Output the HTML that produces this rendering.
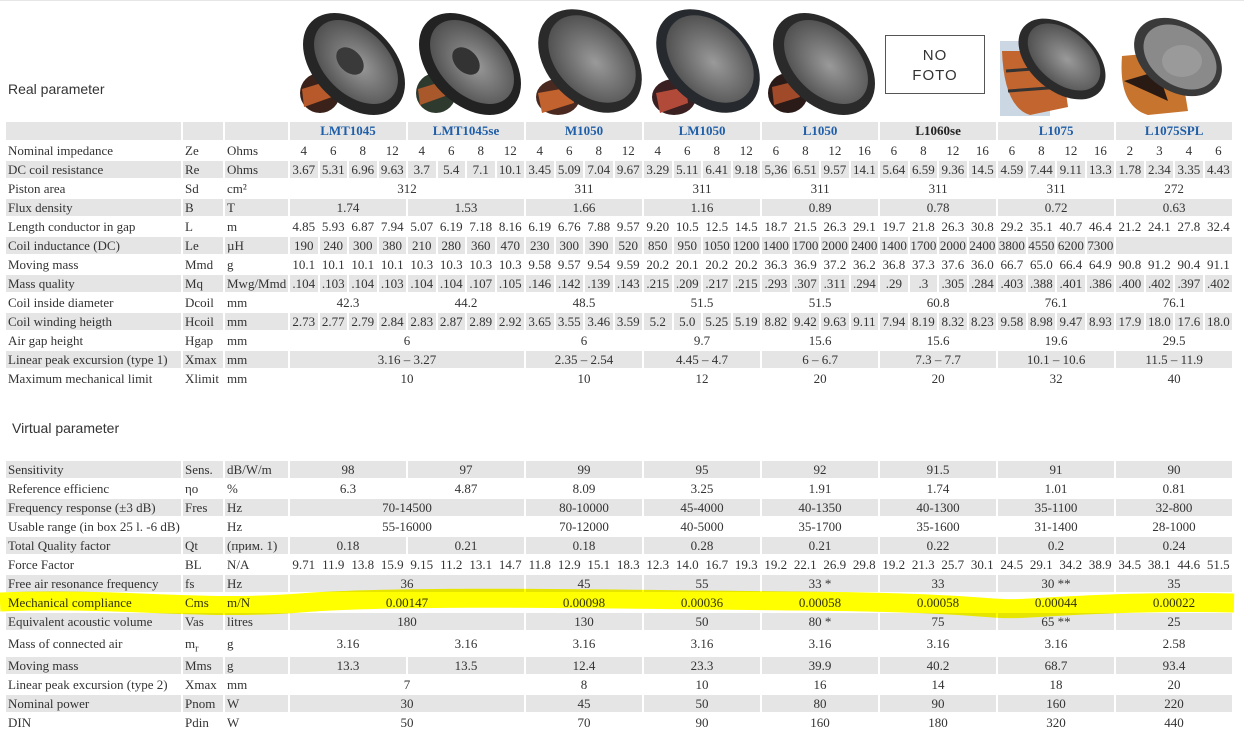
<!DOCTYPE html>
<html><head><meta charset="utf-8">
<style>
html,body{margin:0;padding:0;background:#fff;width:1244px;height:730px;overflow:hidden;position:relative}
body{border-top:1px solid #e6e6e6;box-sizing:border-box}
.h{position:absolute;font-family:"Liberation Sans",Arial,sans-serif;font-size:14px;color:#333}
table{position:absolute;left:4px;border-collapse:separate;border-spacing:2px;table-layout:fixed;width:1230px;font-family:"Liberation Serif","Times New Roman",serif;font-size:13px;color:#333}
td{padding:0;height:17px;line-height:17px;white-space:nowrap;overflow:hidden;text-align:center}
td.l,td.s,td.u{text-align:left;padding-left:2px}
tr.g td{background:#e5e5e5}
th{padding:0;height:18px;background:#e5e5e5;font-weight:bold;color:#1f5ea8;font-size:13px}
th.k{color:#222}
th.e{background:#e5e5e5}
.sp{position:absolute}
</style></head><body>
<div class="h" style="left:8px;top:80px">Real parameter</div>
<div class="h" style="left:12px;top:419px">Virtual parameter</div>

<svg class="sp" style="left:0;top:0" width="1244" height="118">
<defs>
<radialGradient id="cone" cx="55%" cy="50%" r="60%"><stop offset="0" stop-color="#9a9a9a"/><stop offset="1" stop-color="#4a4a4a"/></radialGradient>
</defs>
<g transform="translate(292,8)">
<ellipse cx="28" cy="84" rx="20" ry="20" fill="#3a221a"/><path d="M10 80 L36 72 L40 88 L12 98Z" fill="#b7592a"/>
<ellipse cx="62" cy="55" rx="60" ry="40" transform="rotate(45 62 55)" fill="#262626"/>
<ellipse cx="64" cy="53" rx="50" ry="32" transform="rotate(45 64 53)" fill="url(#cone)"/>
<ellipse cx="58" cy="52" rx="16" ry="11" transform="rotate(45 58 52)" fill="#3a3a3a"/></g>
<g transform="translate(408,8)">
<ellipse cx="28" cy="84" rx="20" ry="20" fill="#2f3a2f"/><path d="M10 80 L36 72 L40 86 L12 96Z" fill="#a8582a"/>
<ellipse cx="62" cy="55" rx="60" ry="40" transform="rotate(45 62 55)" fill="#222"/>
<ellipse cx="64" cy="53" rx="50" ry="32" transform="rotate(45 64 53)" fill="url(#cone)"/>
<ellipse cx="58" cy="52" rx="16" ry="11" transform="rotate(45 58 52)" fill="#333"/></g>
<g transform="translate(526,8)">
<ellipse cx="32" cy="88" rx="22" ry="18" fill="#4a2a20"/><path d="M12 84 L46 78 L48 94 L16 104Z" fill="#c2622e"/>
<ellipse cx="64" cy="52" rx="60" ry="42" transform="rotate(45 64 52)" fill="#2a2a2a"/>
<ellipse cx="66" cy="50" rx="51" ry="35" transform="rotate(45 66 50)" fill="url(#cone)"/></g>
<g transform="translate(644,8)">
<ellipse cx="30" cy="88" rx="22" ry="18" fill="#3a2020"/><path d="M12 84 L42 78 L44 94 L16 104Z" fill="#b24a3a"/>
<ellipse cx="64" cy="52" rx="60" ry="42" transform="rotate(45 64 52)" fill="#262a2e"/>
<ellipse cx="66" cy="50" rx="51" ry="35" transform="rotate(45 66 50)" fill="url(#cone)"/></g>
<g transform="translate(762,8)">
<ellipse cx="26" cy="84" rx="20" ry="20" fill="#2a1a18"/><path d="M10 78 L34 72 L38 88 L12 96Z" fill="#a04a2a"/>
<ellipse cx="62" cy="55" rx="60" ry="40" transform="rotate(45 62 55)" fill="#2a2a2a"/>
<ellipse cx="64" cy="53" rx="50" ry="32" transform="rotate(45 64 53)" fill="url(#cone)"/></g>
<rect x="885.5" y="34.5" width="99" height="58" fill="#fff" stroke="#555"/>
<text x="935" y="59" text-anchor="middle" font-family="Liberation Sans,sans-serif" font-size="15" fill="#333" letter-spacing="1">NO</text>
<text x="935" y="79" text-anchor="middle" font-family="Liberation Sans,sans-serif" font-size="15" fill="#333" letter-spacing="1">FOTO</text>
<g transform="translate(1000,10)">
<rect x="0" y="30" width="50" height="75" fill="#a9bccf" opacity=".6"/>
<path d="M2 40 Q4 96 30 104 L68 96 L60 40Z" fill="#c2652e"/>
<path d="M6 60 L60 56 M8 80 L62 76" stroke="#333" stroke-width="3"/>
<ellipse cx="62" cy="48" rx="50" ry="32" transform="rotate(40 62 48)" fill="#2b2b2b"/>
<ellipse cx="64" cy="46" rx="42" ry="26" transform="rotate(40 64 46)" fill="url(#cone)"/></g>
<g transform="translate(1118,10)">
<path d="M4 45 Q0 95 30 104 L70 100 L60 40Z" fill="#c7742e"/>
<path d="M6 70 L40 60 L50 90Z" fill="#2a1a14"/>
<ellipse cx="60" cy="46" rx="48" ry="34" transform="rotate(35 60 46)" fill="#3a3a3a"/>
<ellipse cx="62" cy="46" rx="40" ry="28" transform="rotate(35 62 46)" fill="#8a8a8a"/>
<ellipse cx="64" cy="50" rx="20" ry="16" fill="#9a9a9a"/></g>
</svg>

<table style="top:119px">
<colgroup><col style="width:175px"><col style="width:40px"><col style="width:63px">
<col span="32" style="width:27.5px"></colgroup>
<tr><th class="e"></th><th class="e"></th><th class="e"></th><th colspan="4">LMT1045</th><th colspan="4">LMT1045se</th><th colspan="4">M1050</th><th colspan="4">LM1050</th><th colspan="4">L1050</th><th colspan="4" class="k">L1060se</th><th colspan="4">L1075</th><th colspan="4">L1075SPL</th></tr>
<tr><td class="l">Nominal impedance</td><td class="s">Ze</td><td class="u">Ohms</td><td>4</td><td>6</td><td>8</td><td>12</td><td>4</td><td>6</td><td>8</td><td>12</td><td>4</td><td>6</td><td>8</td><td>12</td><td>4</td><td>6</td><td>8</td><td>12</td><td>6</td><td>8</td><td>12</td><td>16</td><td>6</td><td>8</td><td>12</td><td>16</td><td>6</td><td>8</td><td>12</td><td>16</td><td>2</td><td>3</td><td>4</td><td>6</td></tr>
<tr class="g"><td class="l">DC coil resistance</td><td class="s">Re</td><td class="u">Ohms</td><td>3.67</td><td>5.31</td><td>6.96</td><td>9.63</td><td>3.7</td><td>5.4</td><td>7.1</td><td>10.1</td><td>3.45</td><td>5.09</td><td>7.04</td><td>9.67</td><td>3.29</td><td>5.11</td><td>6.41</td><td>9.18</td><td>5,36</td><td>6.51</td><td>9.57</td><td>14.1</td><td>5.64</td><td>6.59</td><td>9.36</td><td>14.5</td><td>4.59</td><td>7.44</td><td>9.11</td><td>13.3</td><td>1.78</td><td>2.34</td><td>3.35</td><td>4.43</td></tr>
<tr><td class="l">Piston area</td><td class="s">Sd</td><td class="u">cm²</td><td colspan="8">312</td><td colspan="4">311</td><td colspan="4">311</td><td colspan="4">311</td><td colspan="4">311</td><td colspan="4">311</td><td colspan="4">272</td></tr>
<tr class="g"><td class="l">Flux density</td><td class="s">B</td><td class="u">T</td><td colspan="4">1.74</td><td colspan="4">1.53</td><td colspan="4">1.66</td><td colspan="4">1.16</td><td colspan="4">0.89</td><td colspan="4">0.78</td><td colspan="4">0.72</td><td colspan="4">0.63</td></tr>
<tr><td class="l">Length conductor in gap</td><td class="s">L</td><td class="u">m</td><td>4.85</td><td>5.93</td><td>6.87</td><td>7.94</td><td>5.07</td><td>6.19</td><td>7.18</td><td>8.16</td><td>6.19</td><td>6.76</td><td>7.88</td><td>9.57</td><td>9.20</td><td>10.5</td><td>12.5</td><td>14.5</td><td>18.7</td><td>21.5</td><td>26.3</td><td>29.1</td><td>19.7</td><td>21.8</td><td>26.3</td><td>30.8</td><td>29.2</td><td>35.1</td><td>40.7</td><td>46.4</td><td>21.2</td><td>24.1</td><td>27.8</td><td>32.4</td></tr>
<tr class="g"><td class="l">Coil inductance (DC)</td><td class="s">Le</td><td class="u">µH</td><td>190</td><td>240</td><td>300</td><td>380</td><td>210</td><td>280</td><td>360</td><td>470</td><td>230</td><td>300</td><td>390</td><td>520</td><td>850</td><td>950</td><td>1050</td><td>1200</td><td>1400</td><td>1700</td><td>2000</td><td>2400</td><td>1400</td><td>1700</td><td>2000</td><td>2400</td><td>3800</td><td>4550</td><td>6200</td><td>7300</td><td colspan="4"></td></tr>
<tr><td class="l">Moving mass</td><td class="s">Mmd</td><td class="u">g</td><td>10.1</td><td>10.1</td><td>10.1</td><td>10.1</td><td>10.3</td><td>10.3</td><td>10.3</td><td>10.3</td><td>9.58</td><td>9.57</td><td>9.54</td><td>9.59</td><td>20.2</td><td>20.1</td><td>20.2</td><td>20.2</td><td>36.3</td><td>36.9</td><td>37.2</td><td>36.2</td><td>36.8</td><td>37.3</td><td>37.6</td><td>36.0</td><td>66.7</td><td>65.0</td><td>66.4</td><td>64.9</td><td>90.8</td><td>91.2</td><td>90.4</td><td>91.1</td></tr>
<tr class="g"><td class="l">Mass quality</td><td class="s">Mq</td><td class="u">Mwg/Mmd</td><td>.104</td><td>.103</td><td>.104</td><td>.103</td><td>.104</td><td>.104</td><td>.107</td><td>.105</td><td>.146</td><td>.142</td><td>.139</td><td>.143</td><td>.215</td><td>.209</td><td>.217</td><td>.215</td><td>.293</td><td>.307</td><td>.311</td><td>.294</td><td>.29</td><td>.3</td><td>.305</td><td>.284</td><td>.403</td><td>.388</td><td>.401</td><td>.386</td><td>.400</td><td>.402</td><td>.397</td><td>.402</td></tr>
<tr><td class="l">Coil inside diameter</td><td class="s">Dcoil</td><td class="u">mm</td><td colspan="4">42.3</td><td colspan="4">44.2</td><td colspan="4">48.5</td><td colspan="4">51.5</td><td colspan="4">51.5</td><td colspan="4">60.8</td><td colspan="4">76.1</td><td colspan="4">76.1</td></tr>
<tr class="g"><td class="l">Coil winding heigth</td><td class="s">Hcoil</td><td class="u">mm</td><td>2.73</td><td>2.77</td><td>2.79</td><td>2.84</td><td>2.83</td><td>2.87</td><td>2.89</td><td>2.92</td><td>3.65</td><td>3.55</td><td>3.46</td><td>3.59</td><td>5.2</td><td>5.0</td><td>5.25</td><td>5.19</td><td>8.82</td><td>9.42</td><td>9.63</td><td>9.11</td><td>7.94</td><td>8.19</td><td>8.32</td><td>8.23</td><td>9.58</td><td>8.98</td><td>9.47</td><td>8.93</td><td>17.9</td><td>18.0</td><td>17.6</td><td>18.0</td></tr>
<tr><td class="l">Air gap height</td><td class="s">Hgap</td><td class="u">mm</td><td colspan="8">6</td><td colspan="4">6</td><td colspan="4">9.7</td><td colspan="4">15.6</td><td colspan="4">15.6</td><td colspan="4">19.6</td><td colspan="4">29.5</td></tr>
<tr class="g"><td class="l">Linear peak excursion (type 1)</td><td class="s">Xmax</td><td class="u">mm</td><td colspan="8">3.16 – 3.27</td><td colspan="4">2.35 – 2.54</td><td colspan="4">4.45 – 4.7</td><td colspan="4">6 – 6.7</td><td colspan="4">7.3 – 7.7</td><td colspan="4">10.1 – 10.6</td><td colspan="4">11.5 – 11.9</td></tr>
<tr><td class="l">Maximum mechanical limit</td><td class="s">Xlimit</td><td class="u">mm</td><td colspan="8">10</td><td colspan="4">10</td><td colspan="4">12</td><td colspan="4">20</td><td colspan="4">20</td><td colspan="4">32</td><td colspan="4">40</td></tr>
</table>

<table style="top:458px">
<colgroup><col style="width:175px"><col style="width:40px"><col style="width:63px">
<col span="32" style="width:27.5px"></colgroup>
<tr class="g"><td class="l">Sensitivity</td><td class="s">Sens.</td><td class="u">dB/W/m</td><td colspan="4">98</td><td colspan="4">97</td><td colspan="4">99</td><td colspan="4">95</td><td colspan="4">92</td><td colspan="4">91.5</td><td colspan="4">91</td><td colspan="4">90</td></tr>
<tr><td class="l">Reference efficienc</td><td class="s">ηo</td><td class="u">%</td><td colspan="4">6.3</td><td colspan="4">4.87</td><td colspan="4">8.09</td><td colspan="4">3.25</td><td colspan="4">1.91</td><td colspan="4">1.74</td><td colspan="4">1.01</td><td colspan="4">0.81</td></tr>
<tr class="g"><td class="l">Frequency response (±3 dB)</td><td class="s">Fres</td><td class="u">Hz</td><td colspan="8">70-14500</td><td colspan="4">80-10000</td><td colspan="4">45-4000</td><td colspan="4">40-1350</td><td colspan="4">40-1300</td><td colspan="4">35-1100</td><td colspan="4">32-800</td></tr>
<tr><td class="l">Usable range (in box 25 l. -6 dB)</td><td class="s"></td><td class="u">Hz</td><td colspan="8">55-16000</td><td colspan="4">70-12000</td><td colspan="4">40-5000</td><td colspan="4">35-1700</td><td colspan="4">35-1600</td><td colspan="4">31-1400</td><td colspan="4">28-1000</td></tr>
<tr class="g"><td class="l">Total Quality factor</td><td class="s">Qt</td><td class="u">(прим. 1)</td><td colspan="4">0.18</td><td colspan="4">0.21</td><td colspan="4">0.18</td><td colspan="4">0.28</td><td colspan="4">0.21</td><td colspan="4">0.22</td><td colspan="4">0.2</td><td colspan="4">0.24</td></tr>
<tr><td class="l">Force Factor</td><td class="s">BL</td><td class="u">N/A</td><td>9.71</td><td>11.9</td><td>13.8</td><td>15.9</td><td>9.15</td><td>11.2</td><td>13.1</td><td>14.7</td><td>11.8</td><td>12.9</td><td>15.1</td><td>18.3</td><td>12.3</td><td>14.0</td><td>16.7</td><td>19.3</td><td>19.2</td><td>22.1</td><td>26.9</td><td>29.8</td><td>19.2</td><td>21.3</td><td>25.7</td><td>30.1</td><td>24.5</td><td>29.1</td><td>34.2</td><td>38.9</td><td>34.5</td><td>38.1</td><td>44.6</td><td>51.5</td></tr>
<tr class="g"><td class="l">Free air resonance frequency</td><td class="s">fs</td><td class="u">Hz</td><td colspan="8">36</td><td colspan="4">45</td><td colspan="4">55</td><td colspan="4">33 *</td><td colspan="4">33</td><td colspan="4">30 **</td><td colspan="4">35</td></tr>
<tr><td class="l">Mechanical compliance</td><td class="s">Cms</td><td class="u">m/N</td><td colspan="8">0.00147</td><td colspan="4">0.00098</td><td colspan="4">0.00036</td><td colspan="4">0.00058</td><td colspan="4">0.00058</td><td colspan="4">0.00044</td><td colspan="4">0.00022</td></tr>
<tr class="g"><td class="l">Equivalent acoustic volume</td><td class="s">Vas</td><td class="u">litres</td><td colspan="8">180</td><td colspan="4">130</td><td colspan="4">50</td><td colspan="4">80 *</td><td colspan="4">75</td><td colspan="4">65 **</td><td colspan="4">25</td></tr>
<tr style="height:23px"><td class="l" style="height:23px">Mass of connected air</td><td class="s">m<sub style="font-size:10px;line-height:0">r</sub></td><td class="u">g</td><td colspan="4">3.16</td><td colspan="4">3.16</td><td colspan="4">3.16</td><td colspan="4">3.16</td><td colspan="4">3.16</td><td colspan="4">3.16</td><td colspan="4">3.16</td><td colspan="4">2.58</td></tr>
<tr class="g"><td class="l">Moving mass</td><td class="s">Mms</td><td class="u">g</td><td colspan="4">13.3</td><td colspan="4">13.5</td><td colspan="4">12.4</td><td colspan="4">23.3</td><td colspan="4">39.9</td><td colspan="4">40.2</td><td colspan="4">68.7</td><td colspan="4">93.4</td></tr>
<tr><td class="l">Linear peak excursion (type 2)</td><td class="s">Xmax</td><td class="u">mm</td><td colspan="8">7</td><td colspan="4">8</td><td colspan="4">10</td><td colspan="4">16</td><td colspan="4">14</td><td colspan="4">18</td><td colspan="4">20</td></tr>
<tr class="g"><td class="l">Nominal power</td><td class="s">Pnom</td><td class="u">W</td><td colspan="8">30</td><td colspan="4">45</td><td colspan="4">50</td><td colspan="4">80</td><td colspan="4">90</td><td colspan="4">160</td><td colspan="4">220</td></tr>
<tr><td class="l">DIN</td><td class="s">Pdin</td><td class="u">W</td><td colspan="8">50</td><td colspan="4">70</td><td colspan="4">90</td><td colspan="4">160</td><td colspan="4">180</td><td colspan="4">320</td><td colspan="4">440</td></tr>
</table>

<svg class="sp" style="left:0;top:0;mix-blend-mode:multiply;pointer-events:none" width="1244" height="730">
<path d="M0,601 C120,596 200,610 300,602 S600,598 800,600 S980,610 1030,607 S1150,600 1234,602" fill="none" stroke="#ffff00" stroke-width="19" stroke-linecap="butt"/>
</svg>
</body></html>
